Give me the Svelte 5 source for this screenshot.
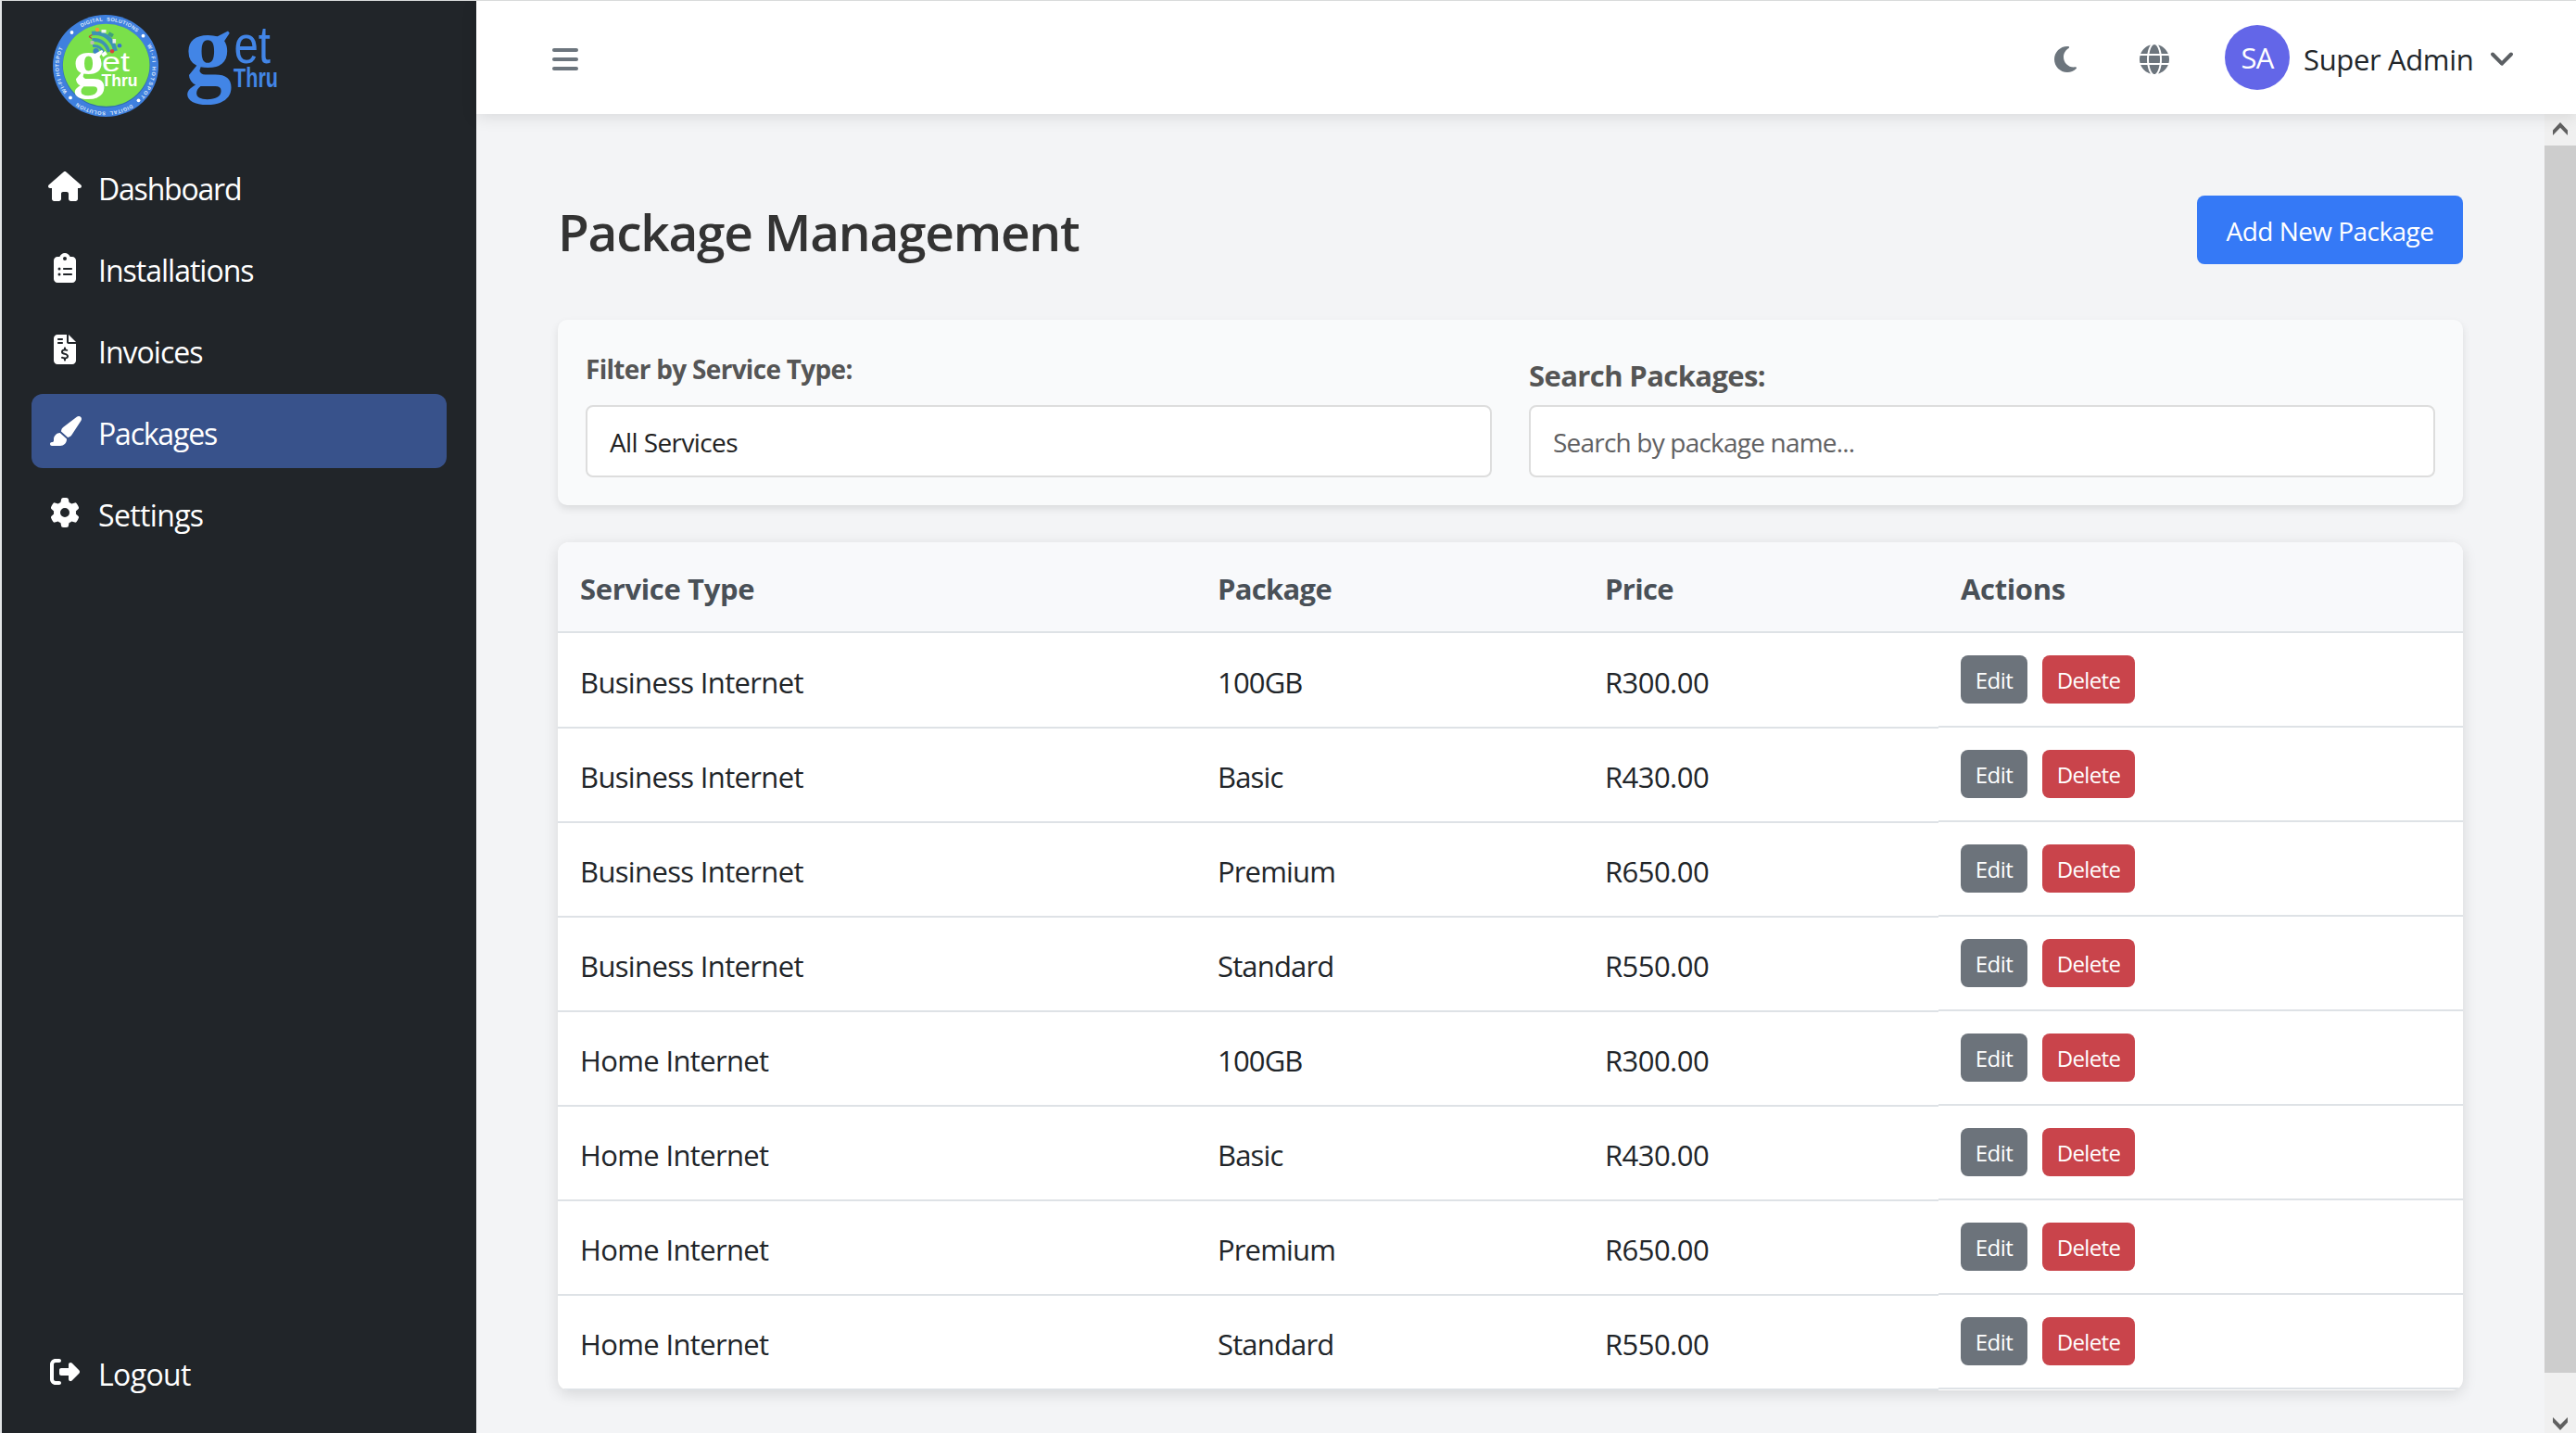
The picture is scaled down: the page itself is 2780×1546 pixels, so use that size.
<script>
  const nav = [
    { label: 'Dashboard', icon: 'house', fit: 'tight' },
    { label: 'Installations', icon: 'clipboard', fit: '' },
    { label: 'Invoices', icon: 'invoice', fit: '' },
    { label: 'Packages', icon: 'brush', fit: 'tight', active: true },
    { label: 'Settings', icon: 'gear', fit: 'loose' }
  ];

  const icons = {
    house: { w: 576, d: 'M575.8 255.5c0 18-15 32.1-32 32.1h-32l.7 160.2c0 2.7-.2 5.4-.5 8.1V472c0 22.1-17.9 40-40 40H456c-1.1 0-2.2 0-3.3-.1c-1.4 .1-2.8 .1-4.2 .1H416 392c-22.1 0-40-17.9-40-40V448 384c0-17.7-14.3-32-32-32H256c-17.7 0-32 14.3-32 32v64 24c0 22.1-17.9 40-40 40H160 128.1c-1.5 0-3-.1-4.5-.2c-1.2 .1-2.4 .2-3.6 .2H104c-22.1 0-40-17.9-40-40V360c0-.9 0-1.9 .1-2.8V287.6H32c-18 0-32-14-32-32.1c0-9 3-17 10-24L266.4 8c7-7 15-8 22-8s15 2 21 7L564.8 231.5c8 7 12 15 11 24z' },
    clipboard: { w: 384, d: 'M192 0c-41.8 0-77.4 26.7-90.5 64H64C28.7 64 0 92.7 0 128V448c0 35.3 28.7 64 64 64H320c35.3 0 64-28.7 64-64V128c0-35.3-28.7-64-64-64H282.5C269.4 26.7 233.8 0 192 0zm0 64a32 32 0 1 1 0 64 32 32 0 1 1 0-64zM72 272a24 24 0 1 1 48 0 24 24 0 1 1 -48 0zm104-16H304c8.8 0 16 7.2 16 16s-7.2 16-16 16H176c-8.8 0-16-7.2-16-16s7.2-16 16-16zM72 368a24 24 0 1 1 48 0 24 24 0 1 1 -48 0zm88 0c0-8.8 7.2-16 16-16H304c8.8 0 16 7.2 16 16s-7.2 16-16 16H176c-8.8 0-16-7.2-16-16z' },
    invoice: { w: 384, d: 'M64 0C28.7 0 0 28.7 0 64V448c0 35.3 28.7 64 64 64H320c35.3 0 64-28.7 64-64V160H256c-17.7 0-32-14.3-32-32V0H64zM256 0V128H384L256 0zM64 80c0-8.8 7.2-16 16-16h64c8.8 0 16 7.2 16 16s-7.2 16-16 16H80c-8.8 0-16-7.2-16-16zm0 64c0-8.8 7.2-16 16-16h64c8.8 0 16 7.2 16 16s-7.2 16-16 16H80c-8.8 0-16-7.2-16-16zm128 72c8.8 0 16 7.2 16 16v17.3c8.5 1.2 16.7 3.1 24.1 5.1c8.5 2.3 13.6 11 11.3 19.6s-11 13.6-19.6 11.3c-11.1-3-22-5.2-32.1-5.3c-8.4-.1-17.4 1.8-23.6 5.5c-5.7 3.4-8.1 7.3-8.1 12.8c0 3.7 1.3 6.5 7.3 10.1c6.9 4.1 16.6 7.1 29.2 10.9l.5 .1 0 0 0 0c11.3 3.4 25.3 7.6 36.3 14.6c12.1 7.6 22.4 19.7 22.7 38.2c.3 19.3-9.6 33.3-22.9 41.6c-7.7 4.8-16.4 7.6-25.1 9.1V440c0 8.8-7.2 16-16 16s-16-7.2-16-16V422.2c-11.2-2.1-21.7-5.7-30.9-8.9l0 0c-2.1-.7-4.2-1.4-6.2-2.1c-8.4-2.8-12.9-11.9-10.1-20.2s11.9-12.9 20.2-10.1c2.5 .8 4.8 1.6 7.1 2.4l0 0 0 0 0 0c13.6 4.6 24.6 8.4 36.3 8.7c9.1 .3 17.9-1.7 23.7-5.3c5.1-3.2 7.9-7.3 7.8-14c-.1-4.6-1.8-7.8-7.7-11.6c-6.8-4.3-16.5-7.4-29-11.2l-1.6-.5 0 0c-11-3.3-24.3-7.3-34.8-13.7c-12-7.2-22.6-18.9-22.7-37.3c-.1-19.4 10.8-32.8 23.8-40.5c7.5-4.4 15.8-7.2 24.1-8.7V232c0-8.8 7.2-16 16-16z' },
    brush: { w: 576, d: 'M339.3 367.1c27.3-3.9 51.9-19.4 67.2-42.9L568.2 74.1c12.6-19.5 9.4-45.3-7.6-61.2S517.7-4.4 499.1 9.6L262.4 187.2c-24 18-38.2 46.1-38.4 76.1L339.3 367.1zm-19.6 25.4l-116-104.4C143.9 290.3 96 339.6 96 400c0 3.9 .2 7.8 .6 11.6C98.4 429.1 86.4 448 68.8 448H64c-17.7 0-32 14.3-32 32s14.3 32 32 32H208c61.9 0 112-50.1 112-112c0-2.5-.1-5-.2-7.5z' },
    gear: { w: 512, d: 'M495.9 166.6c3.2 8.7 .5 18.4-6.4 24.6l-43.3 39.4c1.1 8.3 1.7 16.8 1.7 25.4s-.6 17.1-1.7 25.4l43.3 39.4c6.9 6.2 9.6 15.9 6.4 24.6c-4.4 11.9-9.7 23.3-15.8 34.3l-4.7 8.1c-6.6 11-14 21.4-22.1 31.2c-5.9 7.2-15.7 9.6-24.5 6.8l-55.7-17.7c-13.4 10.3-28.2 18.9-44 25.4l-12.5 57.1c-2 9.1-9 16.3-18.2 17.8c-13.8 2.3-28 3.5-42.5 3.5s-28.7-1.2-42.5-3.5c-9.2-1.5-16.2-8.7-18.2-17.8l-12.5-57.1c-15.8-6.5-30.6-15.1-44-25.4L83.1 425.9c-8.8 2.8-18.6 .3-24.5-6.8c-8.1-9.8-15.5-20.2-22.1-31.2l-4.7-8.1c-6.1-11-11.4-22.4-15.8-34.3c-3.2-8.7-.5-18.4 6.4-24.6l43.3-39.4C64.6 273.1 64 264.6 64 256s.6-17.1 1.7-25.4L22.4 191.2c-6.9-6.2-9.6-15.9-6.4-24.6c4.4-11.9 9.7-23.3 15.8-34.3l4.7-8.1c6.6-11 14-21.4 22.1-31.2c5.9-7.2 15.7-9.6 24.5-6.8l55.7 17.7c13.4-10.3 28.2-18.9 44-25.4l12.5-57.1c2-9.1 9-16.3 18.2-17.8C227.3 1.2 241.5 0 256 0s28.7 1.2 42.5 3.5c9.2 1.5 16.2 8.7 18.2 17.8l12.5 57.1c15.8 6.5 30.6 15.1 44 25.4l55.7-17.7c8.8-2.8 18.6-.3 24.5 6.8c8.1 9.8 15.5 20.2 22.1 31.2l4.7 8.1c6.1 11 11.4 22.4 15.8 34.3zM256 336a80 80 0 1 0 0-160 80 80 0 1 0 0 160z' },
    logout: { w: 512, d: 'M377.9 105.9L500.7 228.7c7.2 7.2 11.3 17.1 11.3 27.3s-4.1 20.1-11.3 27.3L377.9 406.1c-6.4 6.4-15 9.9-24 9.9c-18.7 0-33.9-15.2-33.9-33.9l0-62.1-128 0c-17.7 0-32-14.3-32-32l0-64c0-17.7 14.3-32 32-32l128 0 0-62.1c0-18.7 15.2-33.9 33.9-33.9c9 0 17.6 3.6 24 9.9zM160 96L96 96c-17.7 0-32 14.3-32 32l0 256c0 17.7 14.3 32 32 32l64 0c17.7 0 32 14.3 32 32s-14.3 32-32 32l-64 0c-53 0-96-43-96-96L0 128C0 75 43 32 96 32l64 0c17.7 0 32 14.3 32 32s-14.3 32-32 32z' },
    moon: { w: 384, d: 'M223.5 32C100 32 0 132.3 0 256S100 480 223.5 480c60.6 0 115.5-24.2 155.8-63.4c5-4.9 6.3-12.5 3.1-18.7s-10.1-9.7-17-8.5c-9.8 1.7-19.8 2.6-30.1 2.6c-96.9 0-175.5-78.8-175.5-176c0-65.8 36-123.1 89.3-153.3c6.1-3.5 9.2-10.5 7.7-17.3s-7.3-11.9-14.3-12.5c-6.3-.5-12.6-.8-19-.8z' },
    globe: { w: 512, d: 'M352 256c0 22.2-1.2 43.6-3.3 64H163.3c-2.2-20.4-3.3-41.8-3.3-64s1.2-43.6 3.3-64H348.7c2.2 20.4 3.3 41.8 3.3 64zm28.8-64H503.9c5.3 20.5 8.1 41.9 8.1 64s-2.8 43.5-8.1 64H380.8c2.1-20.6 3.2-42 3.2-64s-1.1-43.4-3.2-64zm112.6-32H376.7c-10-63.9-29.8-117.4-55.3-151.6c78.3 20.7 142 77.5 171.9 151.6zm-149.1 0H167.7c6.1-36.4 15.5-68.6 27-94.7c10.5-23.6 22.2-40.7 33.5-51.5C239.4 3.2 248.7 0 256 0s16.6 3.2 27.8 13.8c11.3 10.8 23 27.9 33.5 51.5c11.6 26 20.9 58.2 27 94.7zm-209 0H18.6C48.6 85.9 112.2 29.1 190.6 8.4C165.1 42.6 145.3 96.1 135.3 160zM8.1 192H131.2c-2.1 20.6-3.2 42-3.2 64s1.1 43.4 3.2 64H8.1C2.8 299.5 0 278.1 0 256s2.8-43.5 8.1-64zM194.7 446.6c-11.6-26-20.9-58.2-27-94.6H344.3c-6.1 36.4-15.5 68.6-27 94.6c-10.5 23.6-22.2 40.7-33.5 51.5C272.6 508.8 263.3 512 256 512s-16.6-3.2-27.8-13.8c-11.3-10.8-23-27.9-33.5-51.5zM135.3 352c10 63.9 29.8 117.4 55.3 151.6C112.2 482.9 48.6 426.1 18.6 352H135.3zm358.1 0c-30 74.1-93.6 130.9-171.9 151.6c25.5-34.2 45.2-87.7 55.3-151.6H493.4z' }
  };

  const tiers = [
    ['100GB', 'R300.00'],
    ['Basic', 'R430.00'],
    ['Premium', 'R650.00'],
    ['Standard', 'R550.00']
  ];
  const rows = ['Business Internet', 'Home Internet'].flatMap((service) =>
    tiers.map(([name, price]) => ({ service, name, price }))
  );
</script>

{#snippet icon(name)}
  <svg class="fa" viewBox="0 0 {icons[name].w} 512" width={icons[name].w / 16} height="32" aria-hidden="true">
    <path d={icons[name].d} />
  </svg>
{/snippet}

<div class="app">
  <aside class="sidebar">
    <svg class="logos" viewBox="50 10 260 125" width="260" height="125" role="img" aria-label="get Thru">
      <defs>
        <path id="ring-a" d="M114 120.5A50.5 49 0 0 1 114 22.5A50.5 49 0 0 1 114 120.5" />
        <path id="ring-b" d="M114 22.5A50.5 49 0 0 1 114 120.5A50.5 49 0 0 1 114 22.5" />
      </defs>
      <ellipse cx="114" cy="71" rx="57" ry="55" fill="#3f80de" />
      <ellipse cx="114.7" cy="71" rx="47.2" ry="45" fill="#2f6fae" />
      <ellipse cx="114.7" cy="70.3" rx="46.8" ry="44.5" fill="#7ae04a" />
      <g class="ring">
        <text><textPath href="#ring-a" startOffset="23.5%" textLength="50">WI-FI HOTSPOT</textPath></text>
        <text><textPath href="#ring-a" startOffset="51.5%" textLength="64">DIGITAL&#160; SOLUTIONS</textPath></text>
        <text><textPath href="#ring-a" startOffset="77%" textLength="60">WI-FI HOTSPOT</textPath></text>
        <text><textPath href="#ring-b" startOffset="50.5%" textLength="62">DIGITAL&#160; SOLUTION</textPath></text>
      </g>
      <g fill="#fff">
        <circle cx="77.5" cy="35" r="1.9" /><circle cx="154.5" cy="38.7" r="1.9" />
        <circle cx="149.5" cy="108.3" r="1.9" /><circle cx="76" cy="105.4" r="1.9" />
      </g>
      <g fill="none" stroke="#3d92b4" stroke-width="4.6">
        <path d="M99 36C112 34 122 42 124.5 55" />
        <path d="M99.5 43C108 42 115 47 117.5 56" stroke-width="3.6" />
        <path d="M100 49.5C106 49 110 52 111.5 57" stroke-width="3" />
      </g>
      <circle cx="103.6" cy="55.2" r="3.2" fill="#3a84c4" />
      <circle cx="105" cy="32" r="2.2" fill="#f29a38" />
      <rect x="109.5" y="32" width="5" height="3.4" fill="#eef6ee" />
      <rect x="117" y="35.5" width="5.5" height="4" fill="#3fa07a" transform="rotate(30 120 37)" />
      <rect x="121.5" y="42" width="3.6" height="4.6" fill="#e8ece6" />
      <circle cx="129" cy="49.3" r="2.3" fill="#3a74cc" />
      <circle cx="121" cy="55.3" r="2.2" fill="#d8443c" />
      <rect x="97.5" y="44" width="4" height="4" rx="1" fill="#b9bfae" />
      <path d="M96 39.5L99.5 37.5M96 39.5L99 41.5" stroke="#c4473a" stroke-width="1.3" />
      <rect x="109.5" y="56.5" width="5.4" height="4" fill="#fff" transform="rotate(-35 112 58)" />
      <g fill="#fff">
        <text class="g" font-size="71" x="79" y="92" textLength="34" lengthAdjust="spacingAndGlyphs">g</text>
        <text class="et" font-size="29" x="110" y="77" textLength="30" lengthAdjust="spacingAndGlyphs">et</text>
        <text class="thru" font-size="18.5" x="109.5" y="93" textLength="39" lengthAdjust="spacingAndGlyphs">Thru</text>
      </g>
      <g fill="#4285e6">
        <text class="g" font-size="108" x="199.5" y="89" textLength="51" lengthAdjust="spacingAndGlyphs">g</text>
        <text class="et" font-size="57" x="252.5" y="67.5" textLength="39.5" lengthAdjust="spacingAndGlyphs">et</text>
        <text class="thru" font-size="30" x="252" y="94" textLength="48" lengthAdjust="spacingAndGlyphs">Thru</text>
      </g>
    </svg>

    <nav>
      {#each nav as item}
        <a class="item {item.fit}" class:active={item.active} href="#top">
          <span class="ico">{@render icon(item.icon)}</span>
          <span class="lbl">{item.label}</span>
        </a>
      {/each}
    </nav>

    <a class="item loose logout" href="#top">
      <span class="ico">{@render icon('logout')}</span>
      <span class="lbl">Logout</span>
    </a>
  </aside>

  <div class="main">
    <header class="topbar">
      <div class="burger"><i></i><i></i><i></i></div>
      <div class="tools">
        <span class="moon">{@render icon('moon')}</span>
        <span class="globe">{@render icon('globe')}</span>
        <span class="avatar">SA</span>
        <span class="user">Super Admin</span>
        <svg class="chev" width="26" height="18" viewBox="0 0 26 18"><path d="M3 3.5L13 13.7L23 3.5" /></svg>
      </div>
    </header>

    <div class="body">
      <main class="content">
        <div class="title">
          <h1>Package Management</h1>
          <button class="add">Add New Package</button>
        </div>

        <section class="filters">
          <div class="field">
            <span class="flabel small">Filter by Service Type:</span>
            <div class="input value">All Services</div>
          </div>
          <div class="field">
            <span class="flabel">Search Packages:</span>
            <div class="input hint">Search by package name...</div>
          </div>
        </section>

        <section class="table">
          <div class="row head">
            <div class="wide">Service Type</div><div>Package</div><div>Price</div><div class="wide">Actions</div>
          </div>
          {#each rows as r}
            <div class="row">
              <div class="cell">{r.service}</div>
              <div class="cell name">{r.name}</div>
              <div class="cell price">{r.price}</div>
              <div class="actions">
                <button class="edit">Edit</button>
                <button class="del">Delete</button>
              </div>
            </div>
          {/each}
        </section>
      </main>

      <div class="scroll">
        <svg width="34" height="34" viewBox="0 0 34 34"><path d="M9 17.5L17 9L25 17.5V23L17 14.7L9 23Z" /></svg>
        <div class="thumb"></div>
        <svg class="down" width="34" height="34" viewBox="0 0 34 34"><path d="M9 16L17 24L25 16V21.5L17 30L9 21.5Z" /></svg>
      </div>
    </div>
  </div>
</div>

<style>
  :global(body) {
    margin: 0;
    background: #f3f4f6;
  }
  .app {
    box-sizing: border-box;
    width: 2780px;
    height: 1546px;
    display: flex;
    overflow: hidden;
    border-top: 1px solid #d9dbdb;
    border-left: 2px solid #e3e5e6;
    background: #f3f4f6;
    color: #212529;
    font-family: "Open Sans", "Noto Sans", sans-serif;
    font-size: 31px;
    letter-spacing: -0.65px;
  }
  button {
    border: 0;
    margin: 0;
    font: inherit;
    letter-spacing: inherit;
    color: #fff;
  }

  .sidebar {
    box-sizing: border-box;
    width: 512px;
    flex: none;
    display: flex;
    flex-direction: column;
    padding: 9px 32px 26px;
    background: #212529;
  }
  .logos {
    display: block;
    flex: none;
    margin-left: 16px;
    overflow: visible;
  }
  .logos text {
    letter-spacing: 0;
  }
  .g {
    font-family: "Liberation Serif", serif;
    font-weight: 700;
  }
  .et {
    font-family: "Liberation Sans", sans-serif;
  }
  .thru {
    font-family: "Liberation Sans", sans-serif;
    font-weight: 700;
  }
  .ring text {
    font-family: "Liberation Sans", sans-serif;
    font-size: 5.6px;
    font-weight: 700;
    fill: #dbe8fa;
    text-anchor: middle;
  }
  nav {
    display: flex;
    flex-direction: column;
    gap: 8px;
    margin-top: 26px;
  }
  .item {
    box-sizing: border-box;
    height: 80px;
    display: flex;
    align-items: center;
    gap: 16px;
    padding: 0 16px;
    border-radius: 12px;
    color: #fff;
    text-decoration: none;
    font-size: 32px;
    letter-spacing: -1px;
  }
  .item.tight {
    letter-spacing: -1.2px;
  }
  .item.loose {
    letter-spacing: -0.65px;
  }
  .item.active {
    background: #38528b;
  }
  .ico {
    width: 40px;
    display: flex;
    justify-content: center;
  }
  .fa {
    display: block;
    fill: currentColor;
  }
  .lbl {
    padding-top: 4px;
  }
  .logout {
    margin-top: auto;
  }

  .main {
    flex: 1;
    min-width: 0;
    display: flex;
    flex-direction: column;
  }
  .topbar {
    position: relative;
    z-index: 1;
    box-sizing: border-box;
    height: 122px;
    flex: none;
    display: flex;
    align-items: center;
    justify-content: space-between;
    padding: 0 67px 0 82px;
    background: #fff;
    box-shadow: 0 4px 16px rgba(0, 0, 0, 0.1);
  }
  .burger {
    width: 28px;
    display: grid;
    gap: 6px;
    padding-top: 4px;
  }
  .burger i {
    height: 4px;
    border-radius: 2px;
    background: #6c757d;
  }
  .tools {
    display: flex;
    align-items: center;
  }
  .moon,
  .globe {
    color: #6c757d;
    padding-top: 4px;
  }
  .moon {
    margin-right: 68px;
  }
  .globe {
    margin-right: 60px;
  }
  .avatar {
    width: 70px;
    height: 70px;
    display: grid;
    place-items: center;
    border-radius: 50%;
    background: #6366e8;
    color: #fff;
    font-size: 31px;
    letter-spacing: -0.8px;
  }
  .user {
    width: 201px;
    padding: 4px 0 0 15px;
    white-space: nowrap;
    letter-spacing: -0.35px;
  }
  .chev {
    margin-top: 4px;
  }
  .chev path {
    fill: none;
    stroke: #5b5f63;
    stroke-width: 4;
    stroke-linecap: round;
    stroke-linejoin: round;
  }

  .body {
    flex: 1;
    min-height: 0;
    display: flex;
  }
  .content {
    flex: 1;
    padding: 88px 88px 0;
  }
  .title {
    height: 74px;
    display: flex;
    align-items: center;
    justify-content: space-between;
    margin-bottom: 60px;
  }
  h1 {
    margin: 0;
    padding-top: 4px;
    font-size: 55px;
    font-weight: 600;
    line-height: 70px;
    letter-spacing: -1.27px;
    color: #333;
  }
  .add {
    width: 287px;
    height: 74px;
    padding: 2px 0 0;
    border-radius: 8px;
    background: #3579f6;
    font-size: 28px;
    letter-spacing: -0.55px;
    white-space: nowrap;
  }

  .filters {
    box-sizing: border-box;
    height: 200px;
    display: grid;
    grid-template-columns: 978px 978px;
    gap: 40px;
    padding: 0 30px 30px;
    margin-bottom: 40px;
    border-radius: 10px;
    background: #f9fafb;
    box-shadow: 0 4px 8px rgba(0, 0, 0, 0.1);
  }
  .field {
    display: flex;
    flex-direction: column;
    justify-content: flex-end;
  }
  .flabel {
    line-height: 40px;
    margin-bottom: 12px;
    font-weight: 700;
    font-size: 31px;
    letter-spacing: -0.6px;
    color: #555;
    white-space: nowrap;
  }
  .flabel.small {
    font-size: 28px;
    letter-spacing: -0.7px;
    margin-bottom: 19px;
  }
  .input {
    box-sizing: border-box;
    height: 78px;
    display: flex;
    align-items: center;
    padding: 2px 24px 0;
    border: 2px solid #ddd;
    border-radius: 8px;
    background: #fff;
    font-size: 28px;
    letter-spacing: -0.6px;
  }
  .value {
    color: #212121;
  }
  .hint {
    color: #5f6062;
    letter-spacing: -0.8px;
  }

  .table {
    overflow: hidden;
    border-radius: 12px;
    background: #fff;
    box-shadow: 0 4px 16px rgba(0, 0, 0, 0.12);
  }
  .row {
    display: grid;
    grid-template-columns: 688px 418px 384px 566px;
    height: 102px;
  }
  .head {
    height: 98px;
    margin-bottom: 1px;
    box-sizing: border-box;
    border-bottom: 2px solid #dee2e6;
    background: #f8f9fb;
    color: #495057;
    font-weight: 700;
    letter-spacing: -0.7px;
  }
  .head .wide {
    letter-spacing: -0.35px;
  }
  .head div {
    display: flex;
    align-items: center;
    padding: 3px 24px 0;
  }
  .cell {
    box-sizing: border-box;
    height: 102px;
    display: flex;
    align-items: center;
    padding: 3px 24px 0;
    border-bottom: 2px solid #dee2e6;
  }
  .name {
    letter-spacing: -0.85px;
  }
  .price {
    letter-spacing: -0.55px;
  }
  .actions {
    box-sizing: border-box;
    height: 101px;
    display: flex;
    align-items: flex-start;
    gap: 16px;
    padding: 23px 24px 0;
    border-bottom: 2px solid #dee2e6;
  }
  .actions button {
    height: 52px;
    padding: 1px 0 0;
    border-radius: 8px;
    font-size: 24px;
    letter-spacing: -0.5px;
  }
  .edit {
    width: 72px;
    background: #6c737b;
  }
  .actions .del {
    width: 100px;
    background: #c9444b;
    letter-spacing: -0.65px;
  }

  .scroll {
    width: 34px;
    height: 1423px;
    display: flex;
    flex-direction: column;
    background: #f0f0f0;
  }
  .scroll svg {
    display: block;
    flex: none;
    fill: #606060;
  }
  .thumb {
    height: 1324px;
    background: #cdcdcd;
  }
  .scroll .down {
    margin-top: auto;
    margin-bottom: -1px;
  }
</style>
